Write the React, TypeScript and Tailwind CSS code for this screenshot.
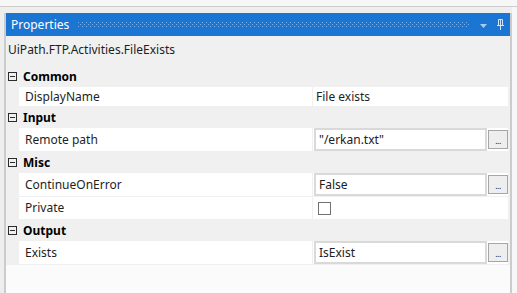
import React from "react";

type Row =
  | { kind: "cat"; label: string }
  | { kind: "prop"; label: string; value?: string; box?: boolean; check?: boolean; h: string };

const ROWS: Row[] = [
  { kind: "cat", label: "Common" },
  { kind: "prop", label: "DisplayName", value: "File exists", h: "h-[20px]" },
  { kind: "cat", label: "Input" },
  { kind: "prop", label: "Remote path", value: "\"/erkan.txt\"", box: true, h: "h-[24px]" },
  { kind: "cat", label: "Misc" },
  { kind: "prop", label: "ContinueOnError", value: "False", box: true, h: "h-[24px]" },
  { kind: "prop", label: "Private", check: true, h: "h-[23px]" },
  { kind: "cat", label: "Output" },
  { kind: "prop", label: "Exists", value: "IsExist", box: true, h: "h-[24px]" },
];

function Grip() {
  return (
    <svg className="h-[5px] flex-1" aria-hidden>
      <defs>
        <pattern id="grip" width="4" height="4" patternUnits="userSpaceOnUse">
          <rect x="0" y="0" width="1" height="1" fill="#7eb1e8" />
          <rect x="2" y="2" width="1" height="1" fill="#7eb1e8" />
        </pattern>
      </defs>
      <rect width="100%" height="5" fill="url(#grip)" />
    </svg>
  );
}

function Pin() {
  return (
    <svg width="7" height="11" viewBox="0 0 7 11" aria-hidden>
      <path d="M1.5 0.5h4v6h-4z" fill="none" stroke="#d4e5f8" />
      <path d="M3.5 1v5.5" stroke="#d4e5f8" />
      <path d="M0 6.5h7" stroke="#d4e5f8" />
      <path d="M3.5 7v4" stroke="#d4e5f8" />
    </svg>
  );
}

function Collapse() {
  return (
    <span className="flex h-[9px] w-[9px] items-center justify-center border border-[#2b2b2b]">
      <span className="h-px w-[5px] bg-[#2b2b2b]" />
    </span>
  );
}

export default function App() {
  return (
    <div
      className="h-[293px] w-[517px] overflow-hidden bg-[#f7f7f7] text-[12px] text-[#1e1e1e]"
      style={{ fontFamily: '"Segoe UI", "Noto Sans", sans-serif' }}
    >
      <div className="h-[7px] border-b border-[#cdcdcd]" />
      <div className="h-[286px] w-[512px] bg-[#eeeeee] pl-[4px] pt-[6px]">
        <div className="flex h-full flex-col border-r-2 border-l-2 border-[#cccccc] bg-[#fbfbfb]">
          <div className="flex h-[23px] items-center bg-[#1b76d3] pl-[5px] pr-[6px] text-white">
            <span className="text-[12px] leading-none">Properties</span>
            <span className="ml-[9px] mr-[10px] flex flex-1">
              <Grip />
            </span>
            <svg width="7" height="4" viewBox="0 0 7 4" className="mr-[10px] mt-[3px]" aria-hidden>
              <path d="M0 0h7L3.5 4z" fill="#a9cbf0" />
            </svg>
            <Pin />
          </div>
          <div className="h-[30px] bg-[#f0f0f0] pl-[2px] pt-[8px] leading-none">
            UiPath.FTP.Activities.FileExists
          </div>
          <div className="flex flex-col">
            {ROWS.map((r) =>
              r.kind === "cat" ? (
                <div key={r.label} className="flex h-[21px] items-center bg-[#f0f0f0]">
                  <span className="ml-[2px] mr-[6px] flex">
                    <Collapse />
                  </span>
                  <span className="font-bold text-black">{r.label}</span>
                </div>
              ) : (
                <div key={r.label} className={`flex ${r.h} bg-[#f0f0f0]`}>
                  <div className="ml-[13px] flex w-[293px] items-center border-b border-[#f0f0f0] bg-white pl-[6px]">
                    {r.label}
                  </div>
                  <div className="w-px bg-[#f0f0f0]" />
                  <div className="flex w-[195px] items-center border-b border-[#f0f0f0] bg-white">
                    {r.box ? (
                      <>
                        <div className="ml-px flex h-[23px] w-[173px] items-center border-2 border-[#d9d9d9] bg-white pl-[3px] text-[#202020]">
                          {r.value}
                        </div>
                        <div className="ml-px flex h-[19px] w-[20px] items-end justify-center border border-[#a6a6a6] bg-[#eeeeee] pb-[3px] text-[9px] leading-none tracking-[-0.5px]">
                          ...
                        </div>
                      </>
                    ) : r.check ? (
                      <span className="ml-[5px] h-[13px] w-[13px] border border-[#707070] bg-white" />
                    ) : (
                      <span className="pl-[3px]">{r.value}</span>
                    )}
                  </div>
                </div>
              ),
            )}
          </div>
        </div>
      </div>
    </div>
  );
}
